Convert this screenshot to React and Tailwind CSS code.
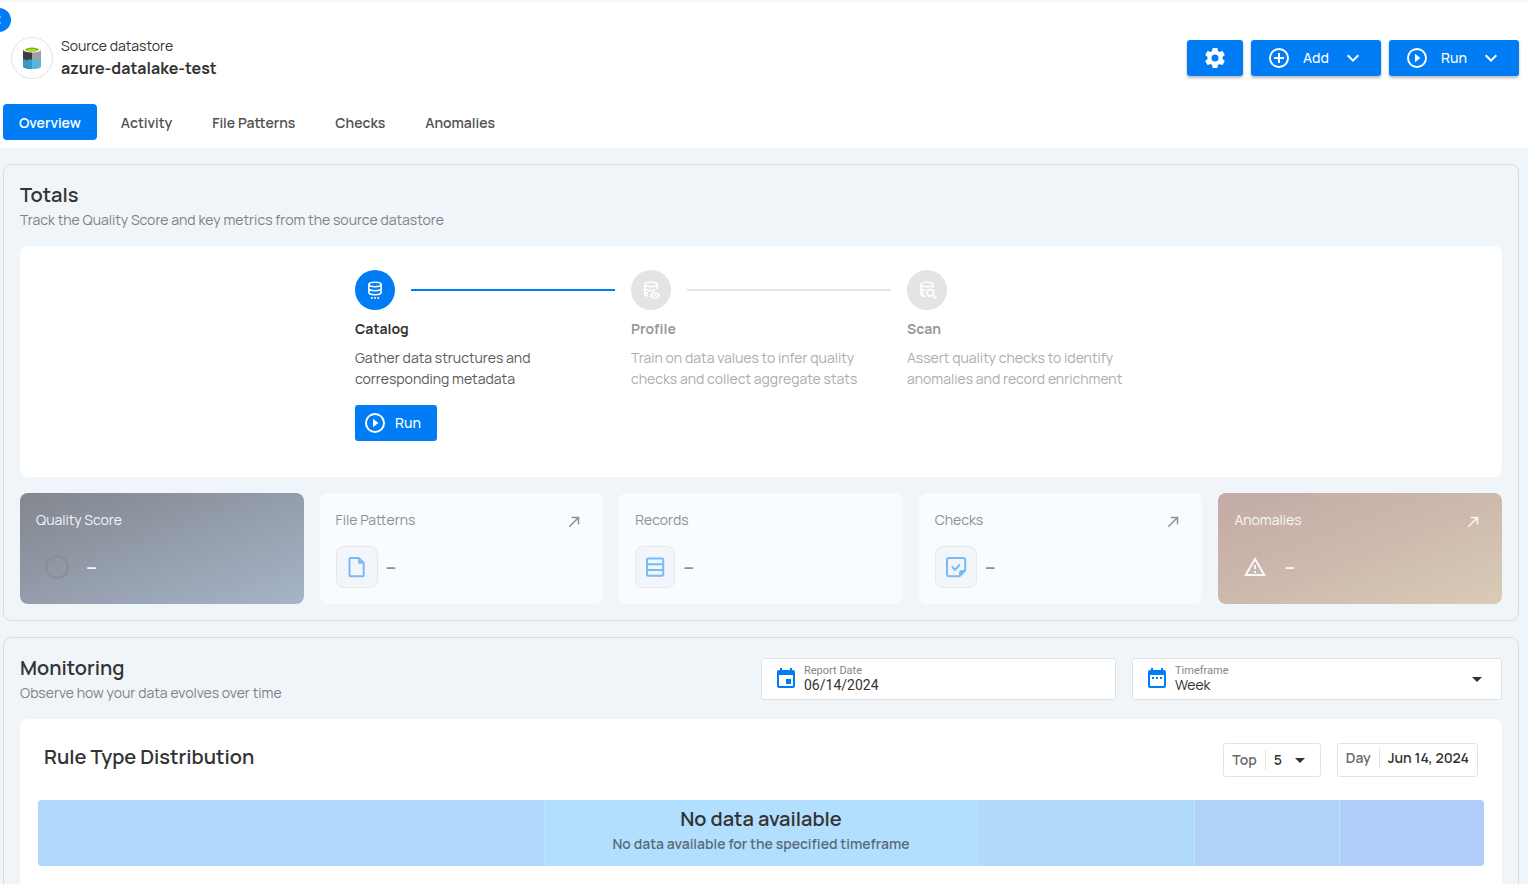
import React, { useState } from "react";

const tabs = ["Overview", "Activity", "File Patterns", "Checks", "Anomalies"];

const steps = [
  {
    title: "Catalog",
    text: "Gather data structures and corresponding metadata",
    icon: "catalog",
    active: true,
  },
  {
    title: "Profile",
    text: "Train on data values to infer quality checks and collect aggregate stats",
    icon: "profile",
    active: false,
  },
  {
    title: "Scan",
    text: "Assert quality checks to identify anomalies and record enrichment",
    icon: "scan",
    active: false,
  },
];

const distribution = [
  { weight: 507, color: "bg-[#b1d7fb]" },
  { weight: 434, color: "bg-[#b1dffd]" },
  { weight: 216, color: "bg-[#b1d9fa]" },
  { weight: 145, color: "bg-[#b1d3fa]" },
  { weight: 144, color: "bg-[#b1cdfa]" },
];

const Icon = ({ d, className = "size-6" }) => (
  <svg viewBox="0 0 24 24" fill="currentColor" className={className} aria-hidden="true">
    <path d={d} />
  </svg>
);

const ring =
  "M12,20C7.59,20 4,16.41 4,12C4,7.59 7.59,4 12,4C16.41,4 20,7.59 20,12C20,16.41 16.41,20 12,20M12,2A10,10 0 0,0 2,12A10,10 0 0,0 12,22A10,10 0 0,0 22,12A10,10 0 0,0 12,2";

const icons = {
  cog: "M12,15.5A3.5,3.5 0 0,1 8.5,12A3.5,3.5 0 0,1 12,8.5A3.5,3.5 0 0,1 15.5,12A3.5,3.5 0 0,1 12,15.5M19.43,12.97C19.47,12.65 19.5,12.33 19.5,12C19.5,11.67 19.47,11.34 19.43,11L21.54,9.37C21.73,9.22 21.78,8.95 21.66,8.73L19.66,5.27C19.54,5.05 19.27,4.96 19.05,5.05L16.56,6.05C16.04,5.66 15.5,5.32 14.87,5.07L14.5,2.42C14.46,2.18 14.25,2 14,2H10C9.75,2 9.54,2.18 9.5,2.42L9.13,5.07C8.5,5.32 7.96,5.66 7.44,6.05L4.95,5.05C4.73,4.96 4.46,5.05 4.34,5.27L2.34,8.73C2.21,8.95 2.27,9.22 2.46,9.37L4.57,11C4.53,11.34 4.5,11.67 4.5,12C4.5,12.33 4.53,12.65 4.57,12.97L2.46,14.63C2.27,14.78 2.21,15.05 2.34,15.27L4.34,18.73C4.46,18.95 4.73,19.03 4.95,18.95L7.44,17.94C7.96,18.34 8.5,18.68 9.13,18.93L9.5,21.58C9.54,21.82 9.75,22 10,22H14C14.25,22 14.46,21.82 14.5,21.58L14.87,18.93C15.5,18.67 16.04,18.34 16.56,17.94L19.05,18.95C19.27,19.03 19.54,18.95 19.66,18.73L21.66,15.27C21.78,15.05 21.73,14.78 21.54,14.63L19.43,12.97Z",
  plus: ring + "M13,7H11V11H7V13H11V17H13V13H17V11H13V7Z",
  play: ring + "M10,16.2L15.4,12L10,7.8V16.2Z",
  chevronDown: "M7.41,8.58L12,13.17L16.59,8.58L18,10L12,16L6,10L7.41,8.58Z",
  chevronLeft: "M15.41,16.58L10.83,12L15.41,7.41L14,6L8,12L14,18L15.41,16.58Z",
  menuDown: "M7,10L12,15L17,10H7Z",
  calendar:
    "M19,19H5V8H19M16,1V3H8V1H6V3H5C3.89,3 3,3.89 3,5V19A2,2 0 0,0 5,21H19A2,2 0 0,0 21,19V5C21,3.89 20.1,3 19,3H18V1M17,12H12V17H17V12Z",
  calendarRange:
    "M9,10H7V12H9V10M13,10H11V12H13V10M17,10H15V12H17V10M19,3H18V1H16V3H8V1H6V3H5C3.89,3 3,3.9 3,5V19A2,2 0 0,0 5,21H19A2,2 0 0,0 21,19V5A2,2 0 0,0 19,3M19,19H5V8H19V19Z",
  arrow: "M5,17.59L15.59,7H9V5H19V15H17V8.41L6.41,19L5,17.59Z",
  alert: "M12,2L1,21H23M12,6L19.53,19H4.47M11,10V14H13V10M11,16V18H13V16",
};

const DatabaseIcon = ({ kind }) => (
  <svg
    viewBox="0 0 20 20"
    fill="none"
    stroke="currentColor"
    strokeWidth="1.6"
    strokeLinecap="round"
    className="size-5"
    aria-hidden="true"
  >
    {kind === "catalog" && (
      <>
        <ellipse cx="10" cy="4.500" rx="6.100" ry="2.200" />
        <path d="M3.900 4.500v8c0 1.300 2.600 2.200 6.100 2.200s6.100-.9 6.100-2.200v-8M3.900 8.500c0 1.300 2.600 2.200 6.100 2.200s6.100-.9 6.100-2.200" />
        <path d="M6.800 18h.1M10 18h.1M13.200 18h.1" strokeWidth="1.900" />
      </>
    )}
    {kind === "profile" && (
      <>
        <ellipse cx="10" cy="4.500" rx="6.100" ry="2.200" />
        <path d="M3.900 4.500v9.500c0 1 1 1.700 2.600 2M16.100 4.500v4M3.900 8.500c0 1.300 2.600 2.200 6.100 2.200 1.400 0 2.400-.1 3.400-.5M3.900 12c.4.700 1.200 1.100 2.600 1.400" />
        <path
          d="M9 15.600c1-2.400 2.900-3.500 5-3.500s4 1.100 5 3.500c-1 2.400-2.900 3.500-5 3.500s-4-1.100-5-3.500Z"
          fill="currentColor"
          stroke="none"
        />
        <circle cx="14" cy="15.600" r="1.700" stroke="#e4e4e4" strokeWidth="1.200" />
      </>
    )}
    {kind === "scan" && (
      <>
        <ellipse cx="10" cy="4.500" rx="6.100" ry="2.200" />
        <path d="M3.900 4.500v9c0 1.500 1.800 2.500 4.600 2.700M16.100 4.500v3M3.900 8.300c0 1 1.600 1.700 3.800 2M3.900 12c.5.600 1.300 1 2.600 1.200" />
        <circle cx="13.500" cy="12.800" r="3.300" />
        <path d="M16 15.400l2.600 2.600" strokeWidth="1.800" />
      </>
    )}
  </svg>
);

const DatalakeLogo = () => (
  <svg viewBox="0 0 20 24" className="h-6 w-5" aria-hidden="true">
    <path d="M1 3.500h9v19.500c-5 0-9-1-9-3Z" fill="#3e3e3e" />
    <path d="M10 3.500h9V20c0 2-4 3-9 3Z" fill="#a0a1a2" />
    <path d="M1 13.500c2-1 3 .8 4.500.6 2-.3 2.500-1.300 4.500-.4V23c-5 0-9-1-9-3Z" fill="#3999c6" />
    <path d="M10 13.700c2 1 3-.9 5-.4 1.500.4 2.500 1 4 .3V20c0 2-4 3-9 3Z" fill="#59b4d9" />
    <ellipse cx="10" cy="3.800" rx="9" ry="2.800" fill="#fff" />
    <ellipse cx="10" cy="3.600" rx="7" ry="2" fill="#7fba00" />
    <ellipse cx="10" cy="4.200" rx="5" ry="1.200" fill="#b8d432" />
  </svg>
);

const FileIcon = () => (
  <svg viewBox="0 0 24 24" className="size-6" aria-hidden="true">
    <path
      d="M5.500 2.900h8.300l4.900 4.900v12.400a1 1 0 0 1-1 1H5.500a1 1 0 0 1-1-1V3.900a1 1 0 0 1 1-1Z"
      fill="none"
      stroke="currentColor"
      strokeWidth="2"
    />
    <path d="M13.100 2.500v6.200h6.200Z" fill="currentColor" />
  </svg>
);

const RecordsIcon = () => (
  <svg viewBox="0 0 24 24" fill="none" stroke="currentColor" strokeWidth="2" className="size-6" aria-hidden="true">
    <rect x="4" y="3.500" width="16.200" height="17.300" rx="1.200" />
    <path d="M4 9.200h16.200M4 15h16.200" />
  </svg>
);

const ChecksIcon = () => (
  <svg viewBox="0 0 24 24" fill="none" stroke="currentColor" strokeWidth="2" className="size-6" aria-hidden="true">
    <path d="M15.500 21.200H5a2 2 0 0 1-2-2V5a2 2 0 0 1 2-2h14.200a2 2 0 0 1 2 2v10.500Z" />
    <path d="M15 21.500V18a3 3 0 0 1 3-3h3.500Z" fill="currentColor" stroke="none" />
    <path d="M8 11.800l3 3 5-5.300" />
  </svg>
);

const MetricCard = ({
  title,
  icon,
  link,
  box = "size-[42px]",
  variant = "bg-[#f8fcff] text-[#8e9092]",
}) => (
  <div className={`flex h-[111px] flex-1 flex-col justify-between rounded-lg px-4 pt-[15px] pb-4 ${variant}`}>
    <div className="flex h-6 items-center justify-between pr-1">
      <h3 className="text-sm">{title}</h3>
      {link && (
        <a href="#details" aria-label={`Open ${title}`} className="pt-1">
          <Icon d={icons.arrow} className="size-[18px]" />
        </a>
      )}
    </div>
    <div className="flex items-center gap-2">
      <span className={`flex items-center justify-center ${box}`}>{icon}</span>
      <span className="text-xl leading-6 font-semibold">–</span>
    </div>
  </div>
);

const SectionHeading = ({ title, text }) => (
  <div>
    <h2 className="text-xl leading-7 font-semibold text-[#333333]">{title}</h2>
    <p className="text-sm leading-[22px] text-[#7f8284]">{text}</p>
  </div>
);

const App = () => {
  const [tab, setTab] = useState("Overview");
  const [date, setDate] = useState("06/14/2024");

  return (
    <div className="relative min-h-screen overflow-hidden bg-[#f0f5fa] font-['Manrope','Inter',sans-serif] text-[#333333]">
      <button
        aria-label="Toggle sidebar"
        className="absolute top-2 -left-[13px] flex size-6 items-center justify-center rounded-full bg-[#007df5] text-white/60"
      >
        <Icon d={icons.chevronLeft} className="size-4" />
      </button>

      <header className="border-t-2 border-[#f7f7f7] bg-white pr-[9px] pb-2 pl-[3px]">
        <div className="flex items-center justify-between pt-[34px] pb-6 pl-2">
          <div className="flex items-center gap-2">
            <div className="flex size-[42px] items-center justify-center rounded-full border border-[#e4e4e4]">
              <DatalakeLogo />
            </div>
            <div>
              <p className="text-sm leading-5">Source datastore</p>
              <h1 className="text-base leading-6 font-bold">azure-datalake-test</h1>
            </div>
          </div>
          <div className="flex gap-2 text-sm font-medium text-white">
            <button
              aria-label="Settings"
              className="flex h-9 w-14 items-center justify-center rounded-[3px] bg-[#007df5] shadow-[0_2px_3px_rgba(0,0,0,0.28)]"
            >
              <Icon d={icons.cog} />
            </button>
            <button className="flex h-9 w-[130px] items-center rounded-[3px] bg-[#007df5] pl-4 shadow-[0_2px_3px_rgba(0,0,0,0.28)]">
              <Icon d={icons.plus} />
              <span className="ml-3 flex-1 text-left">Add</span>
              <Icon d={icons.chevronDown} className="mr-4 size-6" />
            </button>
            <button className="flex h-9 w-[130px] items-center rounded-[3px] bg-[#007df5] pl-4 shadow-[0_2px_3px_rgba(0,0,0,0.28)]">
              <Icon d={icons.play} />
              <span className="ml-3 flex-1 text-left">Run</span>
              <Icon d={icons.chevronDown} className="mr-4 size-6" />
            </button>
          </div>
        </div>
        <nav className="flex gap-2">
          {tabs.map((name) => (
            <button
              key={name}
              onClick={() => setTab(name)}
              className={
                tab === name
                  ? "h-9 rounded bg-[#007df5] px-4 pt-0.5 text-sm font-semibold text-white"
                  : "h-9 rounded px-4 pt-0.5 text-sm font-semibold text-[#515151]"
              }
            >
              {name}
            </button>
          ))}
        </nav>
      </header>

      <main className="flex flex-col gap-4 pt-4 pr-[9px] pl-[3px]">
        {/* Totals */}
        <section className="rounded-lg border border-[#d8dce0] p-4">
          <SectionHeading title="Totals" text="Track the Quality Score and key metrics from the source datastore" />
          <div className="mt-[15px] flex h-[231px] justify-center rounded-lg bg-white pt-6">
            {steps.map((step, index) => (
              <div key={step.title} className={index < 2 ? "w-[276px]" : "w-[260px]"}>
                <div className="flex items-center gap-4 pr-4">
                  <span
                    className={
                      step.active
                        ? "flex size-10 items-center justify-center rounded-full bg-[#007df5] text-white"
                        : "flex size-10 items-center justify-center rounded-full bg-[#e4e4e4] text-white"
                    }
                  >
                    <DatabaseIcon kind={step.icon} />
                  </span>
                  {index < 2 && (
                    <span className={step.active ? "h-0.5 flex-1 bg-[#007df5]" : "h-0.5 flex-1 bg-[#e4e4e4]"} />
                  )}
                </div>
                <h3
                  className={
                    step.active
                      ? "mt-2 text-sm leading-[21px] font-bold"
                      : "mt-2 text-sm leading-[21px] font-bold text-[#999999]"
                  }
                >
                  {step.title}
                </h3>
                <p
                  className={
                    step.active
                      ? "mt-2 w-[236px] text-sm leading-[21px] text-[#5a5a5a]"
                      : "mt-2 w-[236px] text-sm leading-[21px] text-[#adadad]"
                  }
                >
                  {step.text}
                </p>
                {step.active && (
                  <button className="mt-4 flex h-9 items-center gap-2 rounded-[3px] bg-[#007df5] pr-4 pl-2 text-sm font-medium text-white">
                    <Icon d={icons.play} />
                    Run
                  </button>
                )}
              </div>
            ))}
          </div>
          <div className="mt-4 flex gap-4">
            <MetricCard
              title="Quality Score"
              variant="bg-linear-to-br from-[#82868e] via-[#949dab] to-[#a6b4c9] text-[#f0f5fa]"
              icon={<span className="size-6 rounded-full border-2 border-[#8b8e95]" />}
            />
            <MetricCard
              title="File Patterns"
              link
              box="size-[42px] rounded-lg border border-[#e6e9ec] bg-[#f2f6fa] text-[#77baf9]"
              icon={<FileIcon />}
            />
            <MetricCard
              title="Records"
              box="h-[42px] w-10 rounded-lg border border-[#e6e9ec] bg-[#f2f6fa] text-[#77baf9]"
              icon={<RecordsIcon />}
            />
            <MetricCard
              title="Checks"
              link
              box="size-[42px] rounded-lg border border-[#e6e9ec] bg-[#f2f6fa] text-[#77baf9]"
              icon={<ChecksIcon />}
            />
            <MetricCard
              title="Anomalies"
              link
              variant="bg-linear-to-br from-[#c3aaa6] via-[#cdb9ac] to-[#d9ccb7] text-[#f8f8f8]"
              icon={<Icon d={icons.alert} />}
            />
          </div>
        </section>

        {/* Monitoring */}
        <section className="rounded-lg border border-[#d8dce0] p-4">
          <div className="flex items-center justify-between">
            <SectionHeading title="Monitoring" text="Observe how your data evolves over time" />
            <div className="flex gap-4">
              <div className="flex h-[42px] w-[355px] items-center gap-1.5 rounded-[3px] border border-[#e0e3e6] bg-white pl-3">
                <Icon d={icons.calendar} className="size-6 text-[#007df5]" />
                <div className="flex flex-1 flex-col">
                  <label htmlFor="report-date" className="font-[Roboto] text-[11px] leading-3 text-[#858585]">
                    Report Date
                  </label>
                  <input
                    id="report-date"
                    value={date}
                    onChange={(e) => setDate(e.target.value)}
                    className="h-4 w-full font-[Roboto] text-sm outline-none"
                  />
                </div>
              </div>
              <div className="flex h-[42px] w-[370px] items-center gap-1.5 rounded-[3px] border border-[#e0e3e6] bg-white pr-3 pl-3">
                <Icon d={icons.calendarRange} className="size-6 text-[#007df5]" />
                <div className="flex flex-1 flex-col">
                  <label htmlFor="timeframe" className="font-[Roboto] text-[11px] leading-3 text-[#858585]">
                    Timeframe
                  </label>
                  <select id="timeframe" className="h-4 w-full appearance-none text-sm leading-4 outline-none">
                    <option>Week</option>
                    <option>Month</option>
                    <option>Quarter</option>
                  </select>
                </div>
                <Icon d={icons.menuDown} />
              </div>
            </div>
          </div>

          <div className="mt-[15px] h-[231px] rounded-lg bg-white px-[18px] pt-6">
            <div className="flex items-start justify-between px-1.5">
              <h2 className="text-xl leading-7 font-semibold">Rule Type Distribution</h2>
              <div className="flex gap-4 text-sm font-semibold">
                <div className="flex h-[34px] items-center rounded-[3px] border border-[#e0e3e6] px-2">
                  <label htmlFor="top" className="border-r border-[#e4e4e4] pr-2 text-[#6b6b6b]">
                    Top
                  </label>
                  <select id="top" className="w-[22px] appearance-none pl-2 outline-none">
                    <option>5</option>
                    <option>10</option>
                  </select>
                  <Icon d={icons.menuDown} />
                </div>
                <div className="flex h-[34px] items-center rounded-[3px] border border-[#e0e3e6] px-2 pb-1">
                  <span className="border-r border-[#e4e4e4] pr-2 text-[#6b6b6b]">Day</span>
                  <span className="pl-2">Jun 14, 2024</span>
                </div>
              </div>
            </div>
            <div className="mt-[23px] grid h-[66px]">
              <div className="col-start-1 row-start-1 flex gap-px overflow-hidden rounded bg-[#bde2fb]">
                {distribution.map((item) => (
                  <div key={item.color} className={item.color} style={{ flex: item.weight }} />
                ))}
              </div>
              <div className="col-start-1 row-start-1 pt-1 text-center">
                <h3 className="text-xl leading-[30px] font-semibold">No data available</h3>
                <p className="text-sm leading-5 font-semibold text-[#333333]/70">
                  No data available for the specified timeframe
                </p>
              </div>
            </div>
          </div>
        </section>
      </main>
    </div>
  );
};

export default App;
